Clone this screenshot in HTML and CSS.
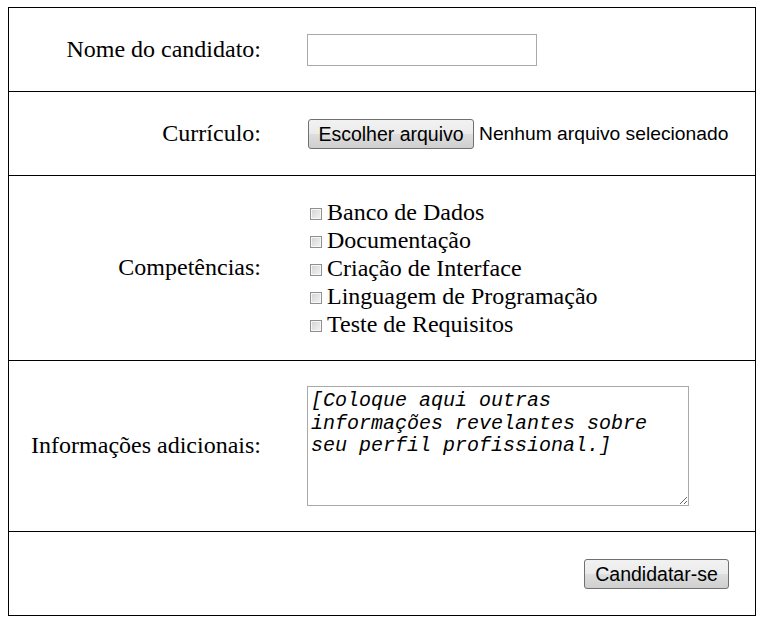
FILE: index.html
```html
<!DOCTYPE html>
<html lang="pt-BR">
<head>
<meta charset="utf-8">
<title>Candidatura</title>
<link rel="stylesheet" href="styles.css">
</head>
<body>
<form class="form">
  <div class="row row-short">
    <label class="label" for="nome">Nome do candidato:</label>
    <div class="control"><input class="text-input" id="nome" type="text"></div>
  </div>
  <div class="row row-short">
    <label class="label">Currículo:</label>
    <div class="control file-control">
      <button type="button" class="btn">Escolher arquivo</button>
      <span class="file-status">Nenhum arquivo selecionado</span>
    </div>
  </div>
  <div class="row row-skills">
    <span class="label">Competências:</span>
    <div class="control">
      <ul class="skills">
        <li><label><input type="checkbox" class="check">Banco de Dados</label></li>
        <li><label><input type="checkbox" class="check">Documentação</label></li>
        <li><label><input type="checkbox" class="check">Criação de Interface</label></li>
        <li><label><input type="checkbox" class="check">Linguagem de Programação</label></li>
        <li><label><input type="checkbox" class="check">Teste de Requisitos</label></li>
      </ul>
    </div>
  </div>
  <div class="row row-info">
    <label class="label" for="info">Informações adicionais:</label>
    <div class="control"><textarea class="textarea" id="info">[Coloque aqui outras informações revelantes sobre seu perfil profissional.]</textarea></div>
  </div>
  <div class="row-submit">
    <button type="submit" class="btn btn-submit">Candidatar-se</button>
  </div>
</form>
</body>
</html>
```
FILE: styles.css
```css
html, body {
  margin: 0;
  padding: 0;
  background: #fff;
}
body {
  font-family: "Liberation Serif", "Times New Roman", serif;
  font-size: 24px;
  color: #000;
}
.form {
  box-sizing: border-box;
  width: 748px;
  margin: 7px 0 0 8px;
  border: 1px solid #000;
}
.row {
  display: grid;
  grid-template-columns: 252px 1fr;
  column-gap: 46px;
  align-items: center;
  border-bottom: 1px solid #000;
}
.row-short { height: 83px; }
.row-skills { height: 184px; }
.row-info { height: 170px; }
.label {
  text-align: right;
  line-height: 27.6px;
}
.control {
  display: flex;
  align-items: center;
}
.text-input {
  box-sizing: border-box;
  width: 230px;
  height: 32px;
  margin: 0;
  border: 1px solid #a9a9a9;
  padding: 2px 4px;
  font-family: "Liberation Sans", Arial, sans-serif;
  font-size: 16px;
  outline: none;
}
.btn {
  box-sizing: border-box;
  height: 30px;
  margin: 0;
  padding: 0 8px;
  border: 1px solid #707070;
  border-radius: 3px;
  background: linear-gradient(#f2f2f2 0%, #ebebeb 48%, #dddddd 52%, #cfcfcf 100%);
  font-family: "Liberation Sans", Arial, sans-serif;
  font-size: 19.5px;
  color: #000;
  line-height: 28px;
}
.file-control .btn { margin-left: 1px; width: 166px; }
.file-status {
  margin-left: 5px;
  font-family: "Liberation Sans", Arial, sans-serif;
  font-size: 19.25px;
}
.skills {
  list-style: none;
  margin: 0;
  padding: 0;
}
.skills li {
  line-height: 28px;
  height: 28px;
}
.check {
  appearance: none;
  -webkit-appearance: none;
  box-sizing: border-box;
  width: 12px;
  height: 12px;
  margin: 0 5px 0 3px;
  border: 1px solid #8f8f8f;
  background: linear-gradient(135deg, #d2d2d2, #f4f4f4);
  box-shadow: inset 0 0 0 1px #f7f7f7;
  vertical-align: baseline;
}
.textarea {
  box-sizing: border-box;
  width: 382px;
  height: 120px;
  margin: 0;
  padding: 3px 3px;
  border: 1px solid #a9a9a9;
  font-family: "Liberation Mono", "Courier New", monospace;
  font-style: italic;
  font-size: 20px;
  line-height: 22.6px;
  color: #000;
  resize: both;
  outline: none;
  overflow: hidden;
}
.row-submit {
  height: 83px;
  display: flex;
  align-items: center;
  justify-content: flex-end;
  padding-right: 26px;
}
.btn-submit { width: 145px; }
```
